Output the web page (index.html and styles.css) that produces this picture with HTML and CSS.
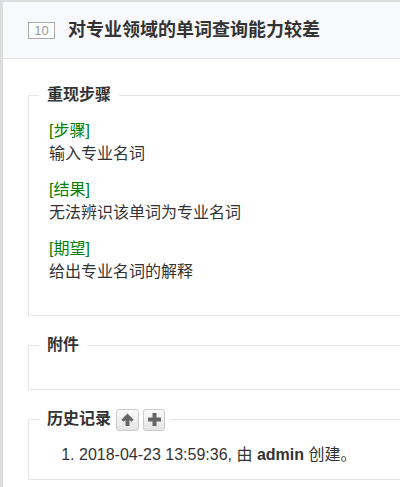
FILE: index.html
```html
<!DOCTYPE html>
<html lang="zh-CN">
<head>
  <meta charset="UTF-8">
  <meta name="viewport" content="width=device-width, initial-scale=1.0">
  <title>对专业领域的单词查询能力较差</title>
  <link rel="stylesheet" href="styles.css">
</head>
<body>
  <div class="page">
    <div class="main-header">
      <span class="prefix">10</span>
      <strong class="title">对专业领域的单词查询能力较差</strong>
    </div>

    <div class="main-content">
      <fieldset class="detail steps">
        <legend>重现步骤</legend>
        <p><span class="tag">[步骤]</span><br>输入专业名词</p>
        <p><span class="tag">[结果]</span><br>无法辨识该单词为专业名词</p>
        <p><span class="tag">[期望]</span><br>给出专业名词的解释</p>
      </fieldset>

      <fieldset class="detail files">
        <legend>附件</legend>
      </fieldset>

      <fieldset class="detail history">
        <legend>
          历史记录
          <button class="btn-icon" title="切换顺序">
            <svg width="13" height="13" viewBox="0 0 13 13"><path d="M6.5 0.5 L12.6 6.8 L10.4 8.8 L8.5 6.9 L8.5 13 L4.5 13 L4.5 6.9 L2.6 8.8 L0.4 6.8 Z" fill="#666"/></svg>
          </button><button class="btn-icon" title="展开全部">
            <svg width="13" height="13" viewBox="0 0 13 13"><path d="M4.5 0 H8.5 V4.5 H13 V8.5 H8.5 V13 H4.5 V8.5 H0 V4.5 H4.5 Z" fill="#666"/></svg>
          </button>
        </legend>
        <ol class="history-list">
          <li>2018-04-23 13:59:36, 由 <strong>admin</strong> 创建。</li>
        </ol>
      </fieldset>
    </div>
  </div>
</body>
</html>
```

FILE: styles.css
```css
html, body {
  margin: 0;
  overflow: hidden;
}

body {
  font-family: "Liberation Sans", Arial, "Noto Sans CJK SC", sans-serif;
  font-size: 16px;
  line-height: 23px;
  color: #333;
  background-color: #fff;
}

.page {
  width: 440px;
  min-height: 487px;
  border-top: 2px solid #dcdcdc;
  border-left: 3px solid #dcdcdc;
}

.main-header {
  display: flex;
  align-items: center;
  height: 56px;
  padding-left: 25px;
  background-color: #f8f9fd;
  border-bottom: 1px solid #e2e2e2;
}

.prefix {
  display: inline-block;
  box-sizing: border-box;
  width: 27px;
  height: 17px;
  line-height: 15px;
  font-size: 13px;
  text-align: center;
  color: #999;
  background-color: #fff;
  border: 1px solid #aaa;
}

.title {
  margin-left: 13px;
  font-size: 18px;
  font-weight: bold;
  color: #333;
}

.main-content {
  padding: 24px 0 0 25px;
}

.detail {
  margin: 0 0 17px;
  padding: 12px 20px 19px;
  border: 1px solid #e5e5e5;
  min-inline-size: 0;
}

.detail legend {
  padding: 0 8px;
  margin-left: -10px;
  font-weight: bold;
  line-height: 24px;
  color: #333;
}

.steps p {
  margin: 0 0 13px;
}

.tag {
  color: #008000;
}

.files {
  padding-bottom: 20px;
}

.history {
  padding-bottom: 13px;
}

.history legend {
  padding-right: 5px;
}

.btn-icon {
  display: inline-flex;
  align-items: center;
  justify-content: center;
  box-sizing: border-box;
  width: 23px;
  height: 22px;
  padding: 0;
  margin-left: 1px;
  vertical-align: middle;
  border: 1px solid #ccc;
  border-radius: 3px;
  background: linear-gradient(#fbfbfb, #e4e4e4);
  cursor: pointer;
}

.btn-icon + .btn-icon {
  width: 22px;
  margin-left: 4px;
}

.history-list {
  margin: 0;
  padding-left: 30px;
}
```
